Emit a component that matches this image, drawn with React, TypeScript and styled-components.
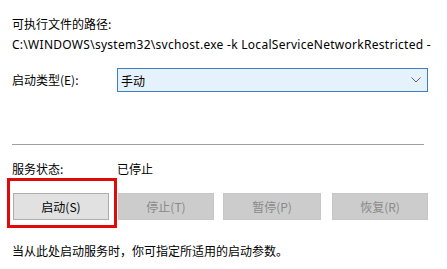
import { JSX } from "react";
import styled, { createGlobalStyle } from "styled-components";

const GlobalStyle = createGlobalStyle`
  html, body {
    margin: 0;
    padding: 0;
    background: #ffffff;
  }
  body {
    font-family: "Noto Sans CJK SC", "Noto Sans", sans-serif;
    font-size: 12px;
    color: #000000;
  }
`;

const StyledPage = styled.div`
  width: 447px;
  height: 269px;
  padding: 16px 12px 0 12px;
  box-sizing: border-box;
  overflow: hidden;
`;

const StyledLine = styled.div<{ $top?: number }>`
  height: 16px;
  line-height: 16px;
  margin-top: ${({ $top }) => $top ?? 0}px;
  white-space: nowrap;
`;

const StyledPath = styled(StyledLine)`
  font-family: "Noto Sans", "Noto Sans CJK SC", sans-serif;
  letter-spacing: 0.28px;
`;

const StyledFieldRow = styled.div<{ $top?: number }>`
  display: flex;
  align-items: center;
  margin-top: ${({ $top }) => $top ?? 0}px;
`;

const StyledLabel = styled.div`
  width: 105px;
  flex-shrink: 0;
  line-height: 16px;
`;

const StyledSelect = styled.div`
  width: 311px;
  height: 24px;
  box-sizing: border-box;
  border: 1px solid #3b80c0;
  background: #e5f1fb;
  display: flex;
  align-items: center;
  justify-content: space-between;
  padding: 0 6px 0 3px;
`;

const StyledDivider = styled.hr`
  margin: 52px 0 0 0;
  width: 412px;
  border: none;
  border-top: 1px solid #a0a0a0;
  height: 0;
`;

const StyledButtonRow = styled.div`
  display: flex;
  margin-top: 16px;
  padding-left: 1px;
`;

const StyledButtonSlot = styled.div<{ $gap: number }>`
  position: relative;
  margin-right: ${({ $gap }) => $gap}px;
`;

const StyledButton = styled.button<{ $w: number }>`
  width: ${({ $w }) => $w}px;
  height: 27px;
  box-sizing: border-box;
  margin: 0;
  padding: 0;
  font-family: "Noto Sans CJK SC", "Noto Sans", sans-serif;
  font-size: 12px;
  border: 1px solid #adadad;
  background: #e1e1e1;
  color: #000000;

  &:disabled {
    border-color: #c6c6c6;
    background: #cccccc;
    color: #8a8a8a;
  }
`;

const StyledHighlight = styled.div`
  position: absolute;
  left: -6px;
  top: -15px;
  width: 110px;
  height: 50px;
  box-sizing: border-box;
  border: 3px solid #e00a0a;
  pointer-events: none;
`;

function Chevron(): JSX.Element {
  return (
    <svg width="10" height="6" viewBox="0 0 10 6">
      <path d="M0.5 0.5 L5 5 L9.5 0.5" fill="none" stroke="#606060" strokeWidth="1" />
    </svg>
  );
}

const buttons = [
  { label: "启动(S)", w: 96, gap: 9, disabled: false, mark: true },
  { label: "停止(T)", w: 96, gap: 9, disabled: true, mark: false },
  { label: "暂停(P)", w: 98, gap: 11, disabled: true, mark: false },
  { label: "恢复(R)", w: 96, gap: 0, disabled: true, mark: false },
];

function App(): JSX.Element {
  return (
    <>
      <GlobalStyle />
      <StyledPage>
        <StyledLine>可执行文件的路径:</StyledLine>
        <StyledPath $top={5}>
          C:\WINDOWS\system32\svchost.exe -k LocalServiceNetworkRestricted -
        </StyledPath>

        <StyledFieldRow $top={15}>
          <StyledLabel>启动类型(E):</StyledLabel>
          <StyledSelect>
            <span>手动</span>
            <Chevron />
          </StyledSelect>
        </StyledFieldRow>

        <StyledDivider />

        <StyledFieldRow $top={15}>
          <StyledLabel>服务状态:</StyledLabel>
          <span>已停止</span>
        </StyledFieldRow>

        <StyledButtonRow>
          {buttons.map((b) => (
            <StyledButtonSlot key={b.label} $gap={b.gap}>
              <StyledButton $w={b.w} disabled={b.disabled}>
                {b.label}
              </StyledButton>
              {b.mark && <StyledHighlight />}
            </StyledButtonSlot>
          ))}
        </StyledButtonRow>

        <StyledLine $top={23}>当从此处启动服务时，你可指定所适用的启动参数。</StyledLine>
      </StyledPage>
    </>
  );
}

export default App;
